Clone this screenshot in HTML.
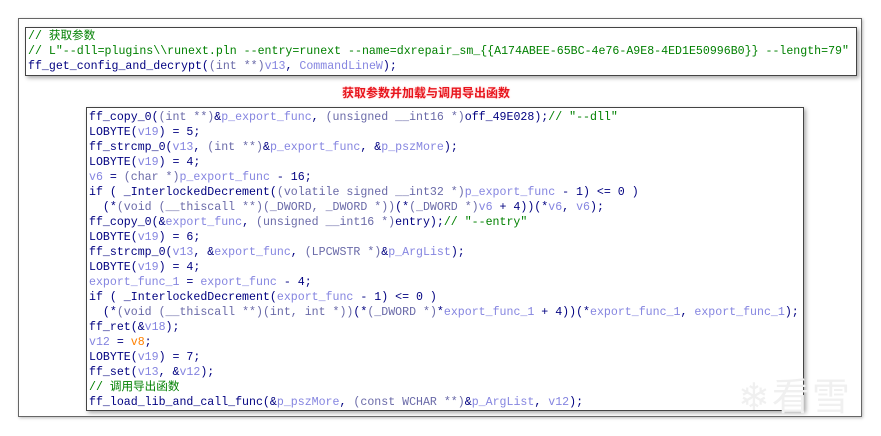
<!DOCTYPE html><html><head><meta charset="utf-8"><style>
body{margin:0;width:881px;height:436px;background:#fff;position:relative;overflow:hidden;font-family:"Liberation Mono","Noto Sans CJK SC",monospace;}
.frame{position:absolute;left:18px;top:18px;width:842px;height:397px;border:1px solid #666;box-shadow:1px 1px 3px #bbb;background:#fff}
.box{position:absolute;border:1px solid #444;background:#fff;box-shadow:2px 2px 4px #aaa;font-size:11.6px;line-height:15px;white-space:pre;color:#000080;padding:0 2px}
.c{color:#008000}.t{color:#6a6aa8}.v{color:#8585e0}.o{color:#ff8000}.s{color:#008000}
.lbl{position:absolute;left:342px;top:84px;font:bold 12px "Noto Sans CJK SC",sans-serif;color:#e8141c;text-shadow:0 0 2px #fcc}
.wm{position:absolute;left:738px;top:366px;font:38px "Noto Sans CJK SC",sans-serif;color:#f0f0f0;letter-spacing:2px}
</style></head><body>
<div class="frame"></div>
<div class="box" style="left:25px;top:27px;width:826px;height:46px;padding-top:1px"><span class="c">// 获取参数</span>
<span class="c">// L"--dll=plugins\\runext.pln --entry=runext --name=dxrepair_sm_{{A174ABEE-65BC-4e76-A9E8-4ED1E50996B0}} --length=79"</span>
ff_get_config_and_decrypt(<span class="t">(int **)</span><span class="v">v13</span>, <span class="v">CommandLineW</span>);</div>
<div class="lbl">获取参数并加载与调用导出函数</div>
<div class="box" style="left:86px;top:107px;width:712px;height:300px;padding-top:2px">ff_copy_0(<span class="t">(int **)</span>&amp;<span class="v">p_export_func</span>, <span class="t">(unsigned __int16 *)</span>off_49E028);<span class="c">// "--dll"</span>
LOBYTE(<span class="v">v19</span>) = 5;
ff_strcmp_0(<span class="v">v13</span>, <span class="t">(int **)</span>&amp;<span class="v">p_export_func</span>, &amp;<span class="v">p_pszMore</span>);
LOBYTE(<span class="v">v19</span>) = 4;
<span class="v">v6</span> = <span class="t">(char *)</span><span class="v">p_export_func</span> - 16;
if ( _InterlockedDecrement(<span class="t">(volatile signed __int32 *)</span><span class="v">p_export_func</span> - 1) &lt;= 0 )
  (*<span class="t">(void (__thiscall **)(_DWORD, _DWORD *))</span>(*<span class="t">(_DWORD *)</span><span class="v">v6</span> + 4))(*<span class="v">v6</span>, <span class="v">v6</span>);
ff_copy_0(&amp;<span class="v">export_func</span>, <span class="t">(unsigned __int16 *)</span>entry);<span class="c">// "--entry"</span>
LOBYTE(<span class="v">v19</span>) = 6;
ff_strcmp_0(<span class="v">v13</span>, &amp;<span class="v">export_func</span>, <span class="t">(LPCWSTR *)</span>&amp;<span class="v">p_ArgList</span>);
LOBYTE(<span class="v">v19</span>) = 4;
<span class="v">export_func_1</span> = <span class="v">export_func</span> - 4;
if ( _InterlockedDecrement(<span class="v">export_func</span> - 1) &lt;= 0 )
  (*<span class="t">(void (__thiscall **)(int, int *))</span>(*<span class="t">(_DWORD *)</span>*<span class="v">export_func_1</span> + 4))(*<span class="v">export_func_1</span>, <span class="v">export_func_1</span>);
ff_ret(&amp;<span class="v">v18</span>);
<span class="v">v12</span> = <span class="o">v8</span>;
LOBYTE(<span class="v">v19</span>) = 7;
ff_set(<span class="v">v13</span>, &amp;<span class="v">v12</span>);
<span class="c">// 调用导出函数</span>
ff_load_lib_and_call_func(&amp;<span class="v">p_pszMore</span>, <span class="t">(const WCHAR **)</span>&amp;<span class="v">p_ArgList</span>, <span class="v">v12</span>);</div>
<div class="wm">❄看雪</div>
</body></html>
